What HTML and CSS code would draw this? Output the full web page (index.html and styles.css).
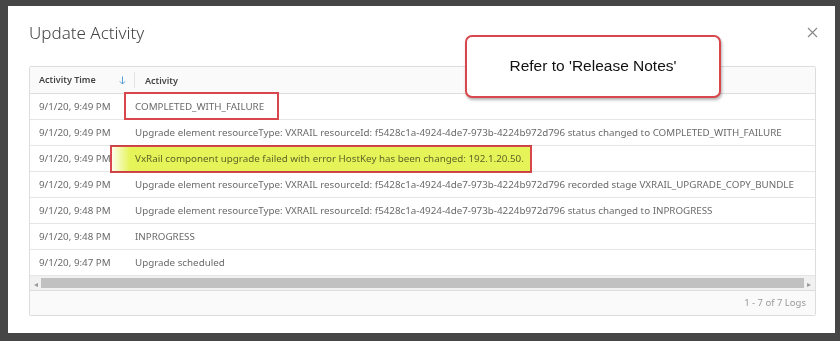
FILE: index.html
```html
<!DOCTYPE html>
<html lang="en">

<head>
    <meta charset="UTF-8">
    <meta name="viewport" content="width=device-width, initial-scale=1.0">
    <title>Update Activity</title>
    <link rel="stylesheet" href="styles.css">
</head>

<body>
    <div class="modal">
        <div class="modal-head">
            <h3>Update Activity</h3>
            <svg class="close" width="11" height="11" viewBox="0 0 11 11">
                <path d="M1 1L10 10M10 1L1 10" stroke="#8a8a8a" stroke-width="1.2" fill="none" />
            </svg>
        </div>

        <div class="grid">
            <div class="row head">
                <div class="time">Activity Time
                    <svg class="sort" width="7" height="9" viewBox="0 0 7 9">
                        <path d="M3.5 0.5V8M0.8 5.3L3.5 8L6.2 5.3" stroke="#5a9fd6" stroke-width="1" fill="none" />
                    </svg>
                </div>
                <div class="act">Activity</div>
            </div>
            <div class="row">
                <div class="time">9/1/20, 9:49 PM</div>
                <div class="act">COMPLETED_WITH_FAILURE</div>
            </div>
            <div class="row">
                <div class="time">9/1/20, 9:49 PM</div>
                <div class="act">Upgrade element resourceType: VXRAIL resourceId: f5428c1a-4924-4de7-973b-4224b972d796 status changed to COMPLETED_WITH_FAILURE</div>
            </div>
            <div class="row">
                <div class="time">9/1/20, 9:49 PM</div>
                <div class="act">VxRail component upgrade failed with error HostKey has been changed: 192.1.20.50.</div>
            </div>
            <div class="row">
                <div class="time">9/1/20, 9:49 PM</div>
                <div class="act">Upgrade element resourceType: VXRAIL resourceId: f5428c1a-4924-4de7-973b-4224b972d796 recorded stage VXRAIL_UPGRADE_COPY_BUNDLE</div>
            </div>
            <div class="row">
                <div class="time">9/1/20, 9:48 PM</div>
                <div class="act">Upgrade element resourceType: VXRAIL resourceId: f5428c1a-4924-4de7-973b-4224b972d796 status changed to INPROGRESS</div>
            </div>
            <div class="row">
                <div class="time">9/1/20, 9:48 PM</div>
                <div class="act">INPROGRESS</div>
            </div>
            <div class="row">
                <div class="time">9/1/20, 9:47 PM</div>
                <div class="act">Upgrade scheduled</div>
            </div>
            <div class="hscroll">
                <span class="arrow">&#x25C2;</span>
                <div class="thumb"></div>
                <span class="arrow">&#x25B8;</span>
            </div>
            <div class="foot">1 - 7 of 7 Logs</div>
        </div>

        <!-- annotations drawn on top of the screenshot -->
        <div class="mark mark-status"></div>
        <div class="mark mark-error"></div>
        <div class="callout">Refer to 'Release Notes'</div>
    </div>
</body>

</html>
```

FILE: styles.css
```css
body {
    margin: 0;
    padding: 6px 5px 8px 8px;
    background: #464646;
    font-family: "Noto Sans", sans-serif;
}

.modal {
    position: relative;
    width: 827px;
    height: 327px;
    box-sizing: border-box;
    padding: 0 19px 0 21px;
    background: #fff;
}

.modal-head {
    display: flex;
    align-items: center;
    justify-content: space-between;
    height: 60px;
}
.modal-head h3 {
    margin: 0 0 8px;
    font-weight: 300;
    font-size: 17px;
    color: #444;
}
.close {
    margin: 0 -2px 8px 0;
}

.grid {
    border: 1px solid #ddd;
    border-radius: 2px;
    font-size: 9.8px;
    color: #6a6a6a;
}

.row {
    display: flex;
    align-items: center;
    height: 25px;
    border-bottom: 1px solid #e6e6e6;
    white-space: nowrap;
}
.row .time {
    width: 88px;
    padding-left: 9px;
}
.row .act {
    padding-left: 8px;
}

.head {
    height: 26px;
    background: #fafafa;
    border-bottom: 1px solid #ddd;
    color: #444;
    font-size: 9px;
    font-weight: 600;
}
.head .time {
    display: flex;
    align-items: center;
    justify-content: space-between;
    width: 87px;
    padding-right: 8px;
    border-right: 1px solid #e3e3e3;
    line-height: 16px;
}
.head .act {
    padding-left: 10px;
}

.hscroll {
    display: flex;
    align-items: center;
    height: 14px;
    background: #f1f1f1;
    border-bottom: 1px solid #ddd;
    padding: 0 4px;
    gap: 3px;
    font-size: 8px;
    color: #999;
}
.hscroll .thumb {
    flex: auto;
    height: 10px;
    background: #c1c1c1;
}

.foot {
    height: 24px;
    line-height: 24px;
    padding-right: 9px;
    text-align: right;
    background: #fafafa;
    color: #999;
    font-size: 9.5px;
}

.mark {
    position: absolute;
    border: 2px solid #d8474b;
    box-sizing: border-box;
}
.mark-status {
    left: 116px;
    top: 86px;
    width: 155px;
    height: 28px;
}
.mark-error {
    left: 102px;
    top: 139px;
    width: 422px;
    height: 28px;
    background: linear-gradient(90deg, rgba(228, 243, 80, 0.1) 0, rgba(228, 243, 80, 0.95) 18px);
    mix-blend-mode: multiply;
}

.callout {
    position: absolute;
    left: 457px;
    top: 29px;
    width: 256px;
    height: 63px;
    box-sizing: border-box;
    display: flex;
    align-items: center;
    justify-content: center;
    padding-bottom: 2px;
    border: 2px solid #d8474b;
    border-radius: 7px;
    background: #fff;
    box-shadow: 1px 2px 3px rgba(0, 0, 0, 0.3);
    font-family: "Liberation Sans", Arial, sans-serif;
    font-size: 15.5px;
    color: #111;
}
```
